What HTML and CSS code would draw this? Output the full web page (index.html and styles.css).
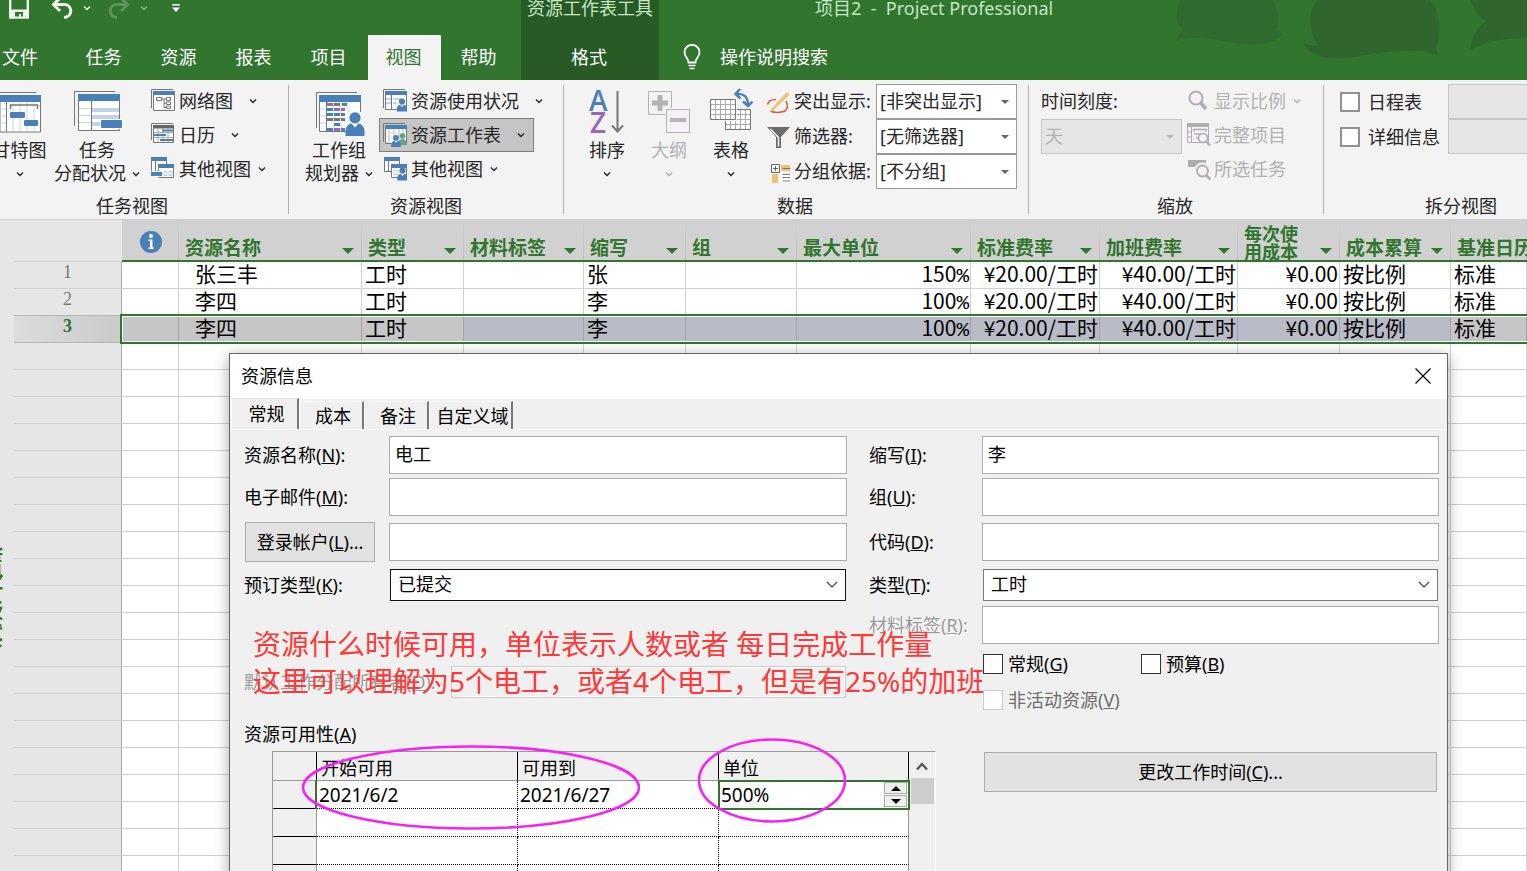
FILE: index.html
```html
<!DOCTYPE html>
<html lang="zh-CN">
<head>
<meta charset="utf-8">
<title>项目2 - Project Professional</title>
<link rel="stylesheet" href="styles.css">
</head>
<body>
<svg width="0" height="0" class="defs" aria-hidden="true">
  <symbol id="chev" viewBox="0 0 8 6"><path d="M1 1.5 4 4.5 7 1.5" fill="none" stroke="currentColor" stroke-width="1.4"/></symbol>
  <symbol id="person" viewBox="0 0 20 24"><circle cx="10" cy="5.8" r="5.6" fill="#4a7fb8"/><path d="M0.5 24v-5c0-4 3-7 6-7.500l3.500 4 3.500-4c3 .5 6 3.500 6 7.500v5z" fill="#4a7fb8"/></symbol>
</svg>

<header class="topbar">
  <svg class="art" width="397" height="80" viewBox="0 0 397 80" aria-hidden="true">
    <path d="M50 0C44 12 46 24 53 30Q47 36 46 42C60 34 80 38 98 42C120 46 145 46 153 33L146 31C150 20 148 8 142 0Z" fill="#2f6b2f"/>
    <path d="M187 0C176 14 180 32 188 46Q180 46 173 43C180 56 195 60 220 58C245 53 262 50 288 51Q300 51 308 56L306 48C312 30 310 12 300 0Z" fill="#2f662e"/>
    <path d="M341 0C344 12 350 18 356 21C346 28 342 38 340 50C355 42 372 38 397 38V0Z" fill="#2f662e"/>
  </svg>
  <div class="top-left">
    <div class="title-row qat">
      <button aria-label="保存"><svg width="20" height="22" viewBox="0 0 20 22"><path d="M1.200 1v19.500h17.600V1" fill="none" stroke="#f0f5ef" stroke-width="2.400"/><path d="M2 12.500h16V20H2z" fill="#f0f5ef"/><path d="M6 15h8v4.500h-2V17h-2v2.500H6z" fill="#31752f"/></svg></button>
      <button class="undo" aria-label="撤消"><svg width="22" height="22" viewBox="0 0 22 22"><path d="M9 1 2.500 7.500 9 14M3 7.500h10c9 0 9 12.500 0 13" fill="none" stroke="#f0f5ef" stroke-width="3"/></svg></button>
      <button class="qchev" aria-label="撤消列表"><svg width="8" height="6"><use href="#chev"/></svg></button>
      <button class="redo" aria-label="恢复" disabled><svg width="22" height="22" viewBox="0 0 22 22"><path d="M13 1l6.500 6.500L13 14M19 7.500H9c-9 0-9 12.500 0 13" fill="none" stroke="#5b9359" stroke-width="3"/></svg></button>
      <button class="qchev dim" aria-label="恢复列表" disabled><svg width="8" height="6"><use href="#chev"/></svg></button>
      <button class="more" aria-label="自定义"><svg width="8" height="8" viewBox="0 0 8 8"><path d="M0 0h8v1.500H0zM0 3.500h8L4 8z" fill="#fff"/></svg></button>
    </div>
    <nav class="tabs">
      <button class="file">文件</button><button>任务</button><button>资源</button><button>报表</button><button>项目</button><button class="on">视图</button><button>帮助</button>
    </nav>
  </div>
  <div class="context">
    <div class="title-row">资源工作表工具</div>
    <nav class="tabs"><button>格式</button></nav>
  </div>
  <div class="top-right">
    <div class="title-row app-title">项目2&nbsp; -&nbsp; Project Professional</div>
    <button class="tell">
      <svg width="18" height="26" viewBox="0 0 18 26"><path d="M5.500 18.500c0-4-4-5.500-4-10.200a7.500 7.500 0 0 1 15 0c0 4.700-4 6.200-4 10.200z" fill="none" stroke="#fff" stroke-width="1.800"/><path d="M5.500 21.500h7M6.500 24.500h5" stroke="#fff" stroke-width="1.600"/></svg>
      <span>操作说明搜索</span>
    </button>
  </div>
</header>

<section class="ribbon">
  <div class="group g1">
    <div class="body">
      <button class="big gantt"><svg width="52" height="48" viewBox="0 0 52 48"><path d="M2 40V4.500h40" fill="none" stroke="#777"/><path d="M6 8h40.500v36H6z" fill="#fff" stroke="#777"/><path d="M5.500 7h41.500v7H5.500z" fill="#4a7fb8"/><path d="M6 21h6M6 28h6M6 35h6M19 14v29M26 14v29M33 14v29M40 14v29" stroke="#c5d7e9"/><path d="M12.500 14v30" stroke="#777"/><path d="M16.500 21v-4h27v4" fill="none" stroke="#777" stroke-width="1.500"/><rect x="16" y="24" width="15" height="6" rx="1" fill="#4a7fb8"/><rect x="30" y="32" width="14" height="6" rx="1" fill="#4a7fb8"/></svg>
        <span>甘特图</span><span class="line"><svg width="8" height="6"><use href="#chev"/></svg></span></button>
      <button class="big usage"><svg width="54" height="48" viewBox="-4 0 54 48"><path d="M.5 38V3.500H41" fill="none" stroke="#777"/><path d="M4.500 6.500h41V42.500h-41z" fill="#fff" stroke="#777"/><path d="M4 6h42v7H4z" fill="#4a7fb8"/><path d="M5 20.500h12M5 27.500h12M5 34.500h12" stroke="#c5d7e9"/><path d="M18 20h27v4H18zM18 27h27v4H18zM18 34h9v4h-9z" fill="#c0d3e8"/><path d="M17.500 13v29" stroke="#777"/><path d="M26 31h23v10H26z" fill="#fff"/><rect x="27" y="32" width="21" height="8" rx="1" fill="#4a7fb8"/></svg>
        <span>任务</span><span class="line">分配状况<svg width="8" height="6"><use href="#chev"/></svg></span></button>
      <div class="smalls">
        <button class="small wide"><svg width="24" height="24" viewBox="0 0 24 24"><path d="M.5 19V.500H22" fill="none" stroke="#777"/><path d="M2.500 2.500h21v19h-21z" fill="#fff" stroke="#777"/><path d="M2 2h22v4H2z" fill="#4a7fb8"/><path d="M5.500 8.500h5v3h-5zM15.500 8.500h4v3h-4zM15.500 13h4v2.500h-4zM15.500 17h4v2.500h-4zM10.500 10h5M13 10v8.500h2.500M13 14.300h2.500" fill="none" stroke="#777"/></svg><span>网络图</span><svg class="c" width="8" height="6"><use href="#chev"/></svg></button>
        <button class="small wide"><svg width="24" height="24" viewBox="0 0 24 24"><path d="M.5 17V.500H22" fill="none" stroke="#777"/><path d="M2.500 2.500h20v17h-20z" fill="#fff" stroke="#777"/><path d="M2 2h21v3.500H2z" fill="#666"/><path d="M7 5v14M12 5v14M17 5v14M3 9.500h19M3 14.500h19" stroke="#aaa"/><path d="M11 7.500h11M3 12h12M9 17h13" stroke="#4a7fb8" stroke-width="2"/></svg><span>日历</span><svg class="c" width="8" height="6"><use href="#chev"/></svg></button>
        <button class="small"><svg width="24" height="24" viewBox="0 0 24 24"><path d="M.5.500h15v16H.500z" fill="#fff" stroke="#777"/><path d="M0 0h16v4H0z" fill="#4a7fb8"/><path d="M4.500 4v10" stroke="#777"/><path d="M7.500 7.500h15v13h-15z" fill="#fff" stroke="#777"/><path d="M7 7h16v4H7z" fill="#4a7fb8"/><path d="M13 14.500h3v4h-3zM18 14.500h3v4h-3z" fill="none" stroke="#b5cce2"/><path d="M0 14h12v6H0z" fill="#f3f3f3"/><rect x="0" y="15" width="11" height="4" fill="#4a7fb8"/></svg><span>其他视图</span><svg class="c" width="8" height="6"><use href="#chev"/></svg></button>
      </div>
    </div>
    <div class="glabel">任务视图</div>
  </div>
  <div class="sep"></div>
  <div class="group g2">
    <div class="body">
      <button class="big team"><svg width="54" height="48" viewBox="-4 0 54 48"><path d="M.5 40V4.500H41" fill="none" stroke="#777"/><path d="M3.500 7.500h41v36h-41z" fill="#fff" stroke="#777"/><path d="M3 7h42v7H3z" fill="#4a7fb8"/><path d="M4 21h6M4 28h6M4 35h6M18 14v29M25 14v29M32 14v29" stroke="#c5d7e9"/><path d="M10.500 14v29" stroke="#777"/><path d="M26 16.500h5M11 21.500h6M18 26.500h6M25 26.500h4M11 26.500h6M18 36.500h6M11 41.500h6M25 41.500h4" stroke="#4a7fb8" stroke-width="3"/><path d="M11 16.500h6M18 21.500h6M25 21.500h4M18 41.500h6" stroke="#9a66b8" stroke-width="3"/><path d="M18 16.500h6M11 31.500h6M18 31.500h6M25 31.500h4" stroke="#777" stroke-width="3"/><path d="M32 24h14v20H30v-8z" fill="#f8f8f8"/><use href="#person" x="29" y="24" width="20" height="24"/></svg>
        <span>工作组</span><span class="line">规划器<svg width="8" height="6"><use href="#chev"/></svg></span></button>
      <div class="smalls">
        <button class="small wide"><svg width="24" height="24" viewBox="0 0 24 24"><path d="M.5 19V.500H22" fill="none" stroke="#777"/><path d="M2.500 2.500h21v18h-21z" fill="#fff" stroke="#777"/><path d="M2 2h22v4H2z" fill="#4a7fb8"/><path d="M8.500 6v14" stroke="#777"/><path d="M3 10h5M3 14h5M10 10h9M10 14h4" stroke="#c0d3e8" stroke-width="2"/><use href="#person" x="13.500" y="9" width="11" height="14"/></svg><span>资源使用状况</span><svg class="c" width="8" height="6"><use href="#chev"/></svg></button>
        <button class="small wide sel"><svg width="24" height="24" viewBox="0 0 24 24"><path d="M.5 19V.500H22" fill="none" stroke="#777"/><path d="M2.500 2.500h21v18h-21z" fill="#fff" stroke="#777"/><path d="M2 2h22v4H2z" fill="#4a7fb8"/><path d="M6 6v14M11 6v14M16 6v14M20 6v14" stroke="#b5b5b5"/><path d="M3 10h20M3 14h20" stroke="#ddd"/><circle cx="19.500" cy="13" r="2.800" fill="#66a08a"/><path d="M15 22c0-8 9-8 9 0z" fill="#66a08a"/><use href="#person" x="8" y="12" width="10" height="12"/></svg><span>资源工作表</span><svg class="c" width="8" height="6"><use href="#chev"/></svg></button>
        <button class="small"><svg width="24" height="24" viewBox="0 0 24 24"><path d="M1.500.500h15v14h-15z" fill="#fff" stroke="#777"/><path d="M1 0h16v4H1z" fill="#4a7fb8"/><path d="M5.500 4v10" stroke="#777"/><path d="M8.500 7.500h15v13h-15z" fill="#fff" stroke="#777"/><path d="M8 7h16v4H8z" fill="#4a7fb8"/><path d="M11 13.500h4v4h-4z" fill="none" stroke="#b5cce2"/><use href="#person" x="14" y="10" width="11" height="14"/></svg><span>其他视图</span><svg class="c" width="8" height="6"><use href="#chev"/></svg></button>
      </div>
    </div>
    <div class="glabel">资源视图</div>
  </div>
  <div class="sep"></div>
  <div class="group g3">
    <div class="body">
      <button class="big"><svg width="36" height="48" viewBox="0 0 36 48"><text x="0" y="23" class="az" fill="#4a7fb8">A</text><text x="1" y="45" class="az" fill="#9a66b8">Z</text><path d="M28.500 3v40M23 37.500l5.500 6 5.500-6" fill="none" stroke="#777" stroke-width="2"/></svg>
        <span>排序</span><span class="line"><svg width="8" height="6"><use href="#chev"/></svg></span></button>
      <button class="big dis" disabled><svg width="42" height="48" viewBox="0 0 42 48"><path d="M.5 3.500h23v23H.500z" fill="#f5f1f6" stroke="#b5b2b6"/><path d="M12 7v16M4 15h16" stroke="#b5b2b6" stroke-width="5"/><path d="M17 20h25v25H17z" fill="#f3f3f3"/><path d="M18.500 21.500h23v23h-23z" fill="#f5f1f6" stroke="#b5b2b6"/><path d="M22 32h16" stroke="#b5b2b6" stroke-width="4"/></svg>
        <span>大纲</span><span class="line"><svg width="8" height="6"><use href="#chev"/></svg></span></button>
      <button class="big"><svg width="44" height="48" viewBox="0 0 44 48"><path d="M16.500 21.500h25v20h-25z" fill="#fff" stroke="#777"/><path d="M21.500 22v19M26.500 22v19M31.500 22v19M36.500 22v19M17 26.500h24M17 31.500h24M17 36.500h24" stroke="#aaa"/><path d="M0 10h28v23H0z" fill="#f3f3f3"/><path d="M1.500 11.500h25v20h-25z" fill="#fff" stroke="#777"/><path d="M6.500 12v19M11.500 12v19M16.500 12v19M21.500 12v19M2 16.500h24M2 21.500h24M2 26.500h24" stroke="#aaa"/><path d="M31 1l-4.500 5 5 4.500M27 6c8-1 12 3 12 11M34 13.500l5 4.500 4.500-4.500" fill="none" stroke="#4a7fb8" stroke-width="2.400"/></svg>
        <span>表格</span><span class="line"><svg width="8" height="6"><use href="#chev"/></svg></span></button>
      <div class="filters">
        <svg width="24" height="24" viewBox="0 0 24 24"><path d="M9 9.500c-6 0-8.500 2.500-8 5 M13 22c7 .5 9-5 6-11M3.500 21c4 2 8 2 12 .5" fill="none" stroke="#dd5a3c" stroke-width="1.600"/><path d="M18.500 3.500 5 18l-3 5 5-3.500L22 5.500c1-3-1.500-4-3.500-2z" fill="#ecc377"/></svg>
        <label for="hl">突出显示:</label>
        <span class="combo"><select id="hl"><option>[非突出显示]</option></select></span>
        <svg width="24" height="24" viewBox="0 0 24 24"><path d="M0 2h23l-9 10v11h-5V12z" fill="#6b6b6b"/><path d="M3.500 4 11.500 12.500v9" fill="none" stroke="#f3f3f3" stroke-width="1.500"/></svg>
        <label for="ft">筛选器:</label>
        <span class="combo"><select id="ft"><option>[无筛选器]</option></select></span>
        <svg width="24" height="24" viewBox="0 0 24 24"><path d="M4.500 4.500h8v8h-8z" fill="#fff" stroke="#666"/><path d="M8.500 6v5M6 8.500h5" stroke="#666"/><path d="M14 5h9v6h-9zM5 14h6v9H5z" fill="#ecc377"/><path d="M13 13h10v10H13z" fill="#fff"/><path d="M15.500 8.500H23M15.500 14.500H23M15.500 17.500H23M15.500 21H23" stroke="#777"/></svg>
        <label for="gr">分组依据:</label>
        <span class="combo"><select id="gr"><option>[不分组]</option></select></span>
      </div>
    </div>
    <div class="glabel">数据</div>
  </div>
  <div class="sep"></div>
  <div class="group g4">
    <div class="body">
      <div class="scale"><label for="ts">时间刻度:</label><span class="combo off"><select id="ts" disabled><option>天</option></select></span></div>
      <div class="smalls">
        <button class="small dis" disabled><svg width="24" height="24" viewBox="0 0 24 24"><circle cx="9" cy="9" r="6.500" fill="#f5f1f6" stroke="#b0adb1" stroke-width="2"/><path d="M13.500 13.500 19 20" stroke="#b0adb1" stroke-width="3.500"/></svg><span>显示比例</span><svg class="c" width="8" height="6"><use href="#chev"/></svg></button>
        <button class="small dis" disabled><svg width="24" height="24" viewBox="0 0 24 24"><path d="M.5.500h21v19H.500z" fill="#f5f1f6" stroke="#b0adb1"/><path d="M0 0h22v4H0z" fill="#b0adb1"/><path d="M4.500 4v15M0 9h4M0 14h4" stroke="#b0adb1"/><path d="M7 8.500V6.500h12v2M7 11h7M9 15h5" fill="none" stroke="#b0adb1" stroke-width="1.600"/><circle cx="16" cy="15" r="4.500" fill="#f5f1f6" stroke="#b0adb1" stroke-width="1.600"/><path d="M19 18l4 4.500" stroke="#b0adb1" stroke-width="2.400"/></svg><span>完整项目</span></button>
        <button class="small dis" disabled><svg width="24" height="24" viewBox="0 0 24 24"><path d="M1 3h18v7H1z" fill="#b0adb1"/><circle cx="15.500" cy="14" r="6.500" fill="#f5f1f6" stroke="#f3f3f3" stroke-width="4"/><circle cx="15.500" cy="14" r="5.500" fill="#f5f1f6" stroke="#b0adb1" stroke-width="1.800"/><path d="M19 18l4.500 4.500" stroke="#b0adb1" stroke-width="2.600"/></svg><span>所选任务</span></button>
      </div>
    </div>
    <div class="glabel">缩放</div>
  </div>
  <div class="sep"></div>
  <div class="group g5">
    <div class="body">
      <div class="checks">
        <label><input type="checkbox">日程表</label>
        <label><input type="checkbox">详细信息</label>
      </div>
      <div class="pickers">
        <span class="combo off"><select disabled aria-label="日程表"><option></option></select></span>
        <span class="combo off"><select disabled aria-label="详细信息视图"><option></option></select></span>
      </div>
    </div>
    <div class="glabel">拆分视图</div>
  </div>
</section>

<main class="sheet">
  <div class="side"><span>资源工作表</span></div>
  <div class="grid-wrap">
  <table class="grid">
    <colgroup><col class="w-head"><col class="w-info"><col class="w-name"><col class="w-s"><col class="w-mat"><col class="w-s"><col class="w-grp"><col class="w-max"><col class="w-std"><col class="w-ovt"><col class="w-s"><col class="w-grp"><col></colgroup>
    <thead><tr>
      <th class="corner"></th>
      <th class="info"><svg width="22" height="22" viewBox="0 0 22 22"><circle cx="11" cy="11" r="11" fill="#4a7fb8"/><circle cx="11" cy="5" r="2" fill="#fff"/><path d="M8.500 8.500H12.500V16.500H14V18H8.500V16.500H10V10H8.500z" fill="#fff"/></svg></th>
      <th><div><span>资源名称</span><i></i></div></th>
      <th><div><span>类型</span><i></i></div></th>
      <th><div><span>材料标签</span><i></i></div></th>
      <th><div><span>缩写</span><i></i></div></th>
      <th><div><span>组</span><i></i></div></th>
      <th><div><span>最大单位</span><i></i></div></th>
      <th><div><span>标准费率</span><i></i></div></th>
      <th><div><span>加班费率</span><i></i></div></th>
      <th><div class="two"><span>每次使<br>用成本</span><i></i></div></th>
      <th><div><span>成本累算</span><i></i></div></th>
      <th><div><span>基准日历</span></div></th>
    </tr></thead>
    <tbody id="rows">
      <tr><th>1</th><td></td><td class="name">张三丰</td><td>工时</td><td></td><td>张</td><td></td><td class="r">150<b>%</b></td><td class="r">¥20.00/工时</td><td class="r">¥40.00/工时</td><td class="r">¥0.00</td><td>按比例</td><td>标准</td></tr>
      <tr><th>2</th><td></td><td class="name">李四</td><td>工时</td><td></td><td>李</td><td></td><td class="r">100<b>%</b></td><td class="r">¥20.00/工时</td><td class="r">¥40.00/工时</td><td class="r">¥0.00</td><td>按比例</td><td>标准</td></tr>
      <tr class="selected"><th>3</th><td class="ro"></td><td class="name ro">李四</td><td class="ro">工时</td><td></td><td>李</td><td></td><td class="r">100<b>%</b></td><td class="r">¥20.00/工时</td><td class="r">¥40.00/工时</td><td class="r">¥0.00</td><td>按比例</td><td class="ro">标准</td></tr>
    </tbody>
  </table>
  </div>
</main>

<section class="dialog" role="dialog" aria-labelledby="dlg-title">
  <div class="dlg-head"><span id="dlg-title">资源信息</span><button aria-label="关闭"><svg width="16" height="16" viewBox="0 0 16 16"><path d="M.5.500l15 15M15.500.500l-15 15" stroke="#000" stroke-width="1.200"/></svg></button></div>
  <div class="dlg-tabs"><button class="on">常规</button><button>成本</button><button>备注</button><button class="long">自定义域</button></div>
  <div class="pane">
    <div class="col left">
      <div class="field"><label for="f1">资源名称(<u>N</u>):</label><input id="f1" type="text" value="电工"></div>
      <div class="field gap-s"><label for="f2">电子邮件(<u>M</u>):</label><input id="f2" type="text"></div>
      <div class="field gap-m"><span class="lab"><button class="btn logon">登录帐户(<u>L</u>)...</button></span><input id="f3" type="text" aria-label="登录帐户"></div>
      <div class="field gap-m"><label for="f4">预订类型(<u>K</u>):</label><span class="drop focus"><select id="f4"><option>已提交</option></select><svg width="12" height="8" viewBox="0 0 12 8"><path d="M1 1l5 5 5-5" fill="none" stroke="#444" stroke-width="1.200"/></svg></span></div>
      <div class="field owner"><label for="f5" class="etched">默认工作分配所有者(<u>O</u>):</label><span class="drop off"><select id="f5" disabled><option></option></select><svg width="12" height="8" viewBox="0 0 12 8"><path d="M1 1l5 5 5-5" fill="none" stroke="#bbb" stroke-width="1.200"/></svg></span></div>
      <div class="avail-label">资源可用性(<u>A</u>)</div>
      <div class="avail">
        <table class="mini">
          <colgroup><col class="m-head"><col class="m-date"><col class="m-date"><col></colgroup>
          <tr><th></th><th>开始可用</th><th>可用到</th><th>单位</th></tr>
          <tr><th></th><td class="cur">2021/6/2</td><td>2021/6/27</td><td class="edit"><div><span>500%</span><span class="spin"><button aria-label="增加"><svg width="10" height="5" viewBox="0 0 10 5"><path d="M0 5 5 0l5 5z"/></svg></button><button aria-label="减少"><svg width="10" height="5" viewBox="0 0 10 5"><path d="M0 0l5 5 5-5z"/></svg></button></span></div></td></tr>
          <tr><th></th><td></td><td></td><td></td></tr>
          <tr><th></th><td></td><td></td><td></td></tr>
          <tr><th></th><td></td><td></td><td></td></tr>
        </table>
        <div class="scroll"><svg width="12" height="9" viewBox="0 0 12 9"><path d="M1 7.500 6 2l5 5.500" fill="none" stroke="#555" stroke-width="2.400"/></svg><div class="thumb"></div></div>
      </div>
    </div>
    <div class="col right">
      <div class="field"><label for="r1">缩写(<u>I</u>):</label><input id="r1" type="text" value="李"></div>
      <div class="field gap-s"><label for="r2">组(<u>U</u>):</label><input id="r2" type="text"></div>
      <div class="field gap-m"><label for="r3">代码(<u>D</u>):</label><input id="r3" type="text"></div>
      <div class="field gap-m"><label for="r4">类型(<u>T</u>):</label><span class="drop"><select id="r4"><option>工时</option></select><svg width="12" height="8" viewBox="0 0 12 8"><path d="M1 1l5 5 5-5" fill="none" stroke="#444" stroke-width="1.200"/></svg></span></div>
      <div class="field gap-s"><label for="r5" class="etched">材料标签(<u>R</u>):</label><input id="r5" type="text" disabled></div>
      <div class="ticks"><label><input type="checkbox"><span>常规(<u>G</u>)</span></label><label><input type="checkbox"><span>预算(<u>B</u>)</span></label><label class="off"><input type="checkbox" disabled><span>非活动资源(<u>V</u>)</span></label></div>
      <button class="btn change">更改工作时间(<u>C</u>)...</button>
    </div>
  </div>
  <p class="note">资源什么时候可用，单位表示人数或者 每日完成工作量<br>这里可以理解为5个电工，或者4个电工，但是有25%的加班</p>
  <svg class="rings" width="550" height="96" viewBox="0 0 550 96" aria-hidden="true"><g fill="none" stroke="#f424f4" stroke-width="2.600"><ellipse cx="171" cy="51.500" rx="168" ry="41"/><ellipse cx="472" cy="44.500" rx="73" ry="41"/></g></svg>
</section>
<script src="app.js"></script>
</body>
</html>
```

FILE: styles.css
```css
*, *::after { box-sizing: border-box; }
html, body { height: 100%; }
body {
  margin: 0;
  overflow: hidden;
  display: flex;
  flex-direction: column;
  position: relative;
  background: #fff;
  color: #262626;
  font: 18px/24px "Noto Sans", "Noto Sans CJK SC", sans-serif;
}
button, select, input { font: inherit; color: inherit; margin: 0; }
button { border: 0; padding: 0; background: none; white-space: nowrap; }
svg { display: block; flex: none; }
.defs { position: absolute; }

/* title bar and tabs */
.topbar {
  position: relative;
  display: flex;
  flex: none;
  margin-top: -20px;
  background: #31752f;
  color: #fff;
}
.art { position: absolute; right: 0; bottom: 0; }
.top-left { flex: none; width: 521px; }
.title-row { height: 55px; display: flex; align-items: center; justify-content: center; color: #c5e6c3; }
.qat { justify-content: flex-start; padding-left: 9px; color: #e8f2e7; }
.undo { margin-left: 22px; }
.qchev { margin-left: 10px; }
.redo { margin-left: 17px; }
.dim { color: #8db58b; }
.more { margin-left: 24px; }
.tabs { display: flex; gap: 2px; height: 45px; justify-content: flex-start; }
.tabs button { width: 73px; padding: 0 2px 2px 0; }
.tabs .file { width: 66px; text-align: left; padding-left: 2px; }
.tabs .on { background: #f3f3f3; color: #31752f; }
.context { width: 138px; flex: none; background: #275a25; }
.context .tabs { justify-content: center; }
.top-right { flex: 1; position: relative; }
.app-title { justify-content: flex-start; padding-left: 156px; }
.tell { display: flex; align-items: center; gap: 19px; height: 45px; padding: 0 0 2px 24px; }

/* ribbon */
.ribbon {
  display: flex;
  flex: none;
  margin-left: -24px;
  overflow: hidden;
  background: #f3f3f3;
  border-bottom: 1px solid #cfcfcf;
}
.group { flex: none; padding-top: 4px; padding-bottom: 2px; }
.g1 { width: 312px; padding-left: 16px; }
.g2 { width: 274px; padding-left: 15px; }
.g3 { width: 464px; padding-left: 12px; }
.g4 { width: 294px; padding-left: 12px; }
.g5 { width: 274px; padding-left: 16px; }
.sep { flex: none; width: 1px; margin: 5px 0; background: #b1b1b1; }
.body { display: flex; height: 105px; }
.glabel { height: 28px; line-height: 34px; text-align: center; }
.g1 .glabel { margin-left: -16px; }
.g2 .glabel { margin-left: -15px; }
.g3 .glabel, .g4 .glabel { margin-left: -14px; }
.g5 .glabel { margin-left: -16px; }
.big { display: flex; flex-direction: column; align-items: center; padding-top: 4px; line-height: 23px; width: 62px; height: 102px; }
.big > svg { margin-bottom: 3px; }
.line { display: flex; align-items: center; gap: 6px; height: 23px; }
.gantt { width: 55px; }
.usage { width: 86px; margin-left: 7px; }
.team { width: 70px; }
.smalls { display: flex; flex-direction: column; align-items: flex-start; margin-left: 11px; }
.g2 .smalls { margin-left: 5px; }
.g4 .smalls { margin-left: 5px; }
.small { display: flex; align-items: center; height: 34px; padding: 0 4px 0 0; }
.small span { margin-left: 4px; }
.g2 .small { padding: 0 9px 0 4px; }
.g4 .small span { margin-left: 3px; }
.small .c { margin-left: 7px; }
.wide .c { margin-left: 16px; }
.small.sel { background: #c5c5c5; outline: 1px solid #7d7d7d; outline-offset: -1px; }
.dis { color: #b1b1b1; }
.az { font: 600 28px "Open Sans", sans-serif; }
.filters {
  display: grid;
  grid-template-columns: 24px 85px 141px;
  grid-auto-rows: 35px;
  align-items: center;
  margin-left: 5px;
}
.filters label { padding: 0 0 2px 3px; white-space: nowrap; }
.combo { display: grid; height: 35px; width: 141px; }
.combo select {
  grid-area: 1 / 1;
  appearance: none;
  width: 100%;
  border: 1px solid #999;
  border-radius: 0;
  background: #fff;
  padding: 0 3px 1px;
}
.combo::after {
  content: "";
  grid-area: 1 / 1;
  place-self: center end;
  margin-right: 8px;
  border: 4px solid transparent;
  border-top-color: #666;
  border-bottom-width: 0;
  pointer-events: none;
}
.combo.off select { background: #e6e6e6; border-color: #c6c6c6; color: #b1b1b1; opacity: 1; }
.combo.off::after { border-top-color: #b8b8b8; }
.scale label { display: block; height: 35px; line-height: 34px; }
.checks { display: flex; flex-direction: column; width: 108px; }
.checks label { display: flex; align-items: center; gap: 8px; height: 35px; white-space: nowrap; }
input[type="checkbox"] { appearance: none; flex: none; width: 20px; height: 20px; background: #fff; border: 2px solid #919191; }
.pickers .combo { width: 150px; }

/* resource sheet */
.sheet { display: flex; flex: 1; min-height: 0; }
.side { position: relative; flex: none; width: 14px; background: #e6e6e6; overflow: hidden; }
.side span {
  position: absolute;
  left: -16px;
  top: 323px;
  writing-mode: vertical-rl;
  transform: rotate(180deg);
  font-size: 21px;
  line-height: 21px;
  font-weight: bold;
  color: #31752f;
}
.grid-wrap { flex: 1; min-width: 0; overflow: hidden; }
.grid { width: 100%; table-layout: fixed; border-collapse: separate; border-spacing: 0; }
.w-head { width: 108px; }
.w-info { width: 57px; }
.w-name { width: 183px; }
.w-s { width: 102px; }
.w-mat { width: 120px; }
.w-grp { width: 111px; }
.w-max { width: 174px; }
.w-std { width: 129px; }
.w-ovt { width: 138px; }
.grid thead th {
  height: 42px;
  padding: 0;
  vertical-align: bottom;
  background: linear-gradient(#d1d1d1, #bdbdbd) right / 1px 100% no-repeat #d1d1d1;
  border-bottom: 2px solid #31752f;
  overflow: hidden;
}
.grid thead .corner { background: #e6e6e6; border-bottom: 1px solid #d1d1d1; }
.grid thead .info { vertical-align: middle; }
.info svg { margin: 3px auto 0; }
.grid thead div {
  display: flex;
  justify-content: space-between;
  align-items: flex-end;
  padding: 0 8px 4px 6px;
  font: bold 19px/19px "Noto Sans CJK SC", sans-serif;
  color: #31752f;
  text-align: left;
  white-space: nowrap;
}
.grid thead .two { padding-bottom: 0; font-size: 18px; line-height: 18px; }
.grid i { border: 6px solid transparent; border-top-color: #31752f; border-bottom: 0; margin-bottom: 2px; }
.grid .two i { margin-bottom: 6px; }
.grid tbody th {
  height: 27px;
  padding: 0;
  vertical-align: top;
  font: 18px/21px "Liberation Serif", serif;
  color: #777;
  background: #e6e6e6;
  border-right: 1px solid #aaa;
  border-bottom: 1px solid #d1d1d1;
}
.grid td {
  height: 27px;
  padding: 0 3px;
  vertical-align: top;
  font: 21px/23px "Noto Sans CJK SC", sans-serif;
  color: #000;
  border-right: 1px solid #d1d1d1;
  border-bottom: 1px solid #d1d1d1;
  white-space: nowrap;
  overflow: hidden;
}
.grid td b { font: 21px/21px "Liberation Mono", monospace; }
.grid .name { padding-left: 16px; }
.grid .r { text-align: right; padding-right: 1px; }
.selected th { position: relative; }
.selected th::after {
  content: "";
  position: absolute;
  top: -2px;
  left: 106px;
  width: 100vw;
  height: 30px;
  border: 2px solid #31752f;
  box-shadow: inset 0 0 0 1px #fff;
  pointer-events: none;
}
.grid .selected td { background: #b9bcc7; border-right-color: #a3a3a3; }
.grid .selected .ro { background: #c6c6c6; }
.grid .selected th { color: #31752f; font-weight: bold; background: linear-gradient(90deg, #dcdcdc, #cacaca); box-shadow: 0 -1px #b5b5b5; border-bottom-color: #b5b5b5; }

/* dialog window */
.dialog {
  position: absolute;
  left: 229px;
  top: 353px;
  width: 1219px;
  height: 600px;
  border: 1px solid #666;
  background: #f0f0f0;
  box-shadow: 0 3px 14px rgba(0, 0, 0, .35);
  color: #000;
}
.dlg-head { display: flex; justify-content: space-between; align-items: center; height: 45px; padding: 0 16px 2px 11px; background: #fff; }
.dlg-tabs { display: flex; align-items: flex-end; height: 31px; border-bottom: 1px solid #fff; padding-left: 1px; }
.dlg-tabs button { width: 65px; height: 28px; padding-left: 4px; line-height: 26px; border-top: 1px solid #fff; border-left: 1px solid #fff; border-right: 2px solid #777; }
.dlg-tabs .on { width: 68px; height: 31px; border-top-color: #e3e3e3; }
.dlg-tabs .long { width: 84px; }
.pane { display: flex; gap: 22px; padding: 6px 8px 0 14px; }
.col { min-width: 0; }
.left { flex: 603 1 0; }
.right { flex: 570 1 0; }
.field { display: flex; align-items: center; }
.gap-s { margin-top: 4px; }
.gap-m { margin-top: 7px; }
.field label, .lab { flex: none; width: 145px; white-space: nowrap; }
.right .field label { width: 113px; }
.field input { flex: 1; min-width: 0; height: 38px; padding: 0 5px 5px; border: 1px solid #abadb3; background: #fff; }
.drop { flex: 1; display: grid; height: 34px; padding: 1px; }
.drop select { grid-area: 1 / 1; appearance: none; border: 1px solid #7a7a7a; border-radius: 0; background: #fff; padding: 0 7px 2px; width: 100%; opacity: 1; }
.drop svg { grid-area: 1 / 1; place-self: center end; margin-right: 8px; pointer-events: none; }
.drop.focus select { border-color: #111; }
.drop.off select { background: #f0f0f0; border-color: #ccc; box-shadow: inset 0 0 0 1px #fff; }
.etched { color: #999; text-shadow: 1px 1px #fff; }
.owner { margin-top: 63px; }
.field.owner label { width: 206px; }
.btn { background: #e1e1e1; border: 1px solid #adadad; }
.logon { width: 130px; height: 40px; margin: -1px 0 -1px 1px; display: block; }
.avail-label { margin-top: 23px; }
.avail { display: flex; width: max-content; margin: 5px 0 0 28px; }
.mini { width: 637px; table-layout: fixed; border-collapse: separate; border-spacing: 0; border-top: 1px solid #999; border-left: 1px solid #999; background: #fff; }
.m-head { width: 44px; }
.m-date { width: 201px; }
.mini th { height: 28px; padding: 4px 4px 0; font-weight: normal; text-align: left; line-height: 24px; background: #f0f0f0; border-right: 1px solid #000; border-bottom: 1px solid #000; }
.mini tr:first-child th { height: 29px; border-bottom-color: #999; }
.mini tr:not(:first-child) th { border-right-color: #999; padding: 0; }
.mini td { height: 28px; padding: 0 2px; font-size: 19px; line-height: 26px; border-right: 1px dotted #000; border-bottom: 1px dotted #000; }
.mini td:last-child { border-right: 1px solid #999; }
.mini .cur { box-shadow: -2px 0 #31752f; }
.mini .edit { padding: 0 1px 0 2px; outline: 2px solid #31752f; outline-offset: -1px; }
.edit div { display: flex; justify-content: space-between; align-items: center; }
.spin { display: grid; gap: 1px; }
.spin button { display: grid; place-items: center; width: 23px; height: 12px; background: #f0f0f0; border: 1px solid #aaa; }
.scroll { width: 27px; border-top: 1px solid #999; border-right: 1px solid #fff; display: flex; flex-direction: column; align-items: center; padding-top: 10px; }
.thumb { width: 23px; height: 26px; margin-top: 7px; background: #cdcdcd; }
.ticks { display: grid; grid-template-columns: 158px 1fr; row-gap: 12px; margin: 8px 0 0 114px; }
.ticks label { display: flex; align-items: center; gap: 5px; white-space: nowrap; }
.ticks input[type="checkbox"] { border: 1px solid #333; }
.ticks .off { color: #6d6d6d; }
.ticks .off input[type="checkbox"] { border-color: #ccc; }
.change { display: block; width: calc(100% - 117px); height: 40px; margin: 40px 0 0 115px; }

/* hand-made notes over the dialog */
.note { position: absolute; left: 23px; top: 272px; margin: 0; font-size: 28px; line-height: 37px; color: #ff3838; white-space: nowrap; }
.rings { position: absolute; left: 70px; top: 382px; }
```

FILE: app.js
```js
// Blank rows below the last resource.
const rows = document.getElementById("rows");
for (let i = 0; i < 20; i++) {
  const tr = document.createElement("tr");
  tr.appendChild(document.createElement("th"));
  for (let c = 0; c < 12; c++) tr.appendChild(document.createElement("td"));
  rows.appendChild(tr);
}
```
